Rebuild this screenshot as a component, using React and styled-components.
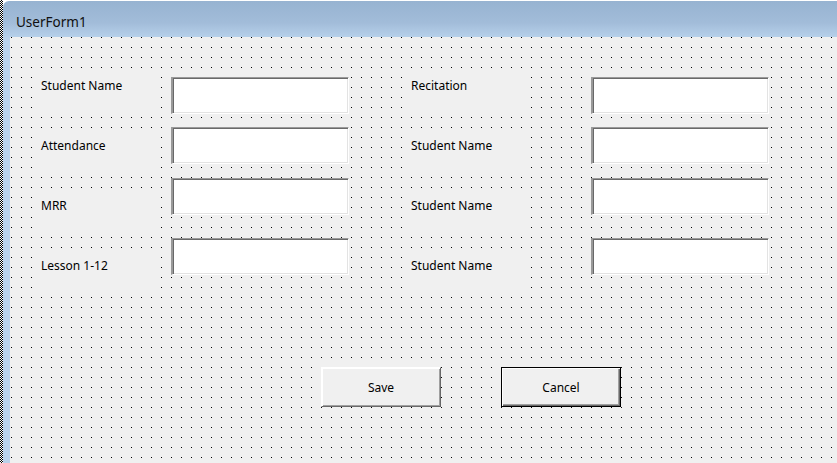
import React from 'react';
import styled, { createGlobalStyle } from 'styled-components';

const GlobalStyle = createGlobalStyle`
  html, body {
    margin: 0;
    padding: 0;
    background: #ffffff;
  }
  body {
    font-family: "Noto Sans", "DejaVu Sans", sans-serif;
  }
`;

// whole designer surface
const Screen = styled.div`
  display: flex;
  width: 837px;
  height: 463px;
  overflow: hidden;
`;

// selection hatching at the far left
const Hatch = styled.div`
  width: 3px;
  flex: none;
  background: conic-gradient(#000 25%, #fff 0 50%, #000 0 75%, #fff 0) 0 0 / 2px 2px;
`;

const Window = styled.div`
  flex: 1;
  display: flex;
  flex-direction: column;
  padding-top: 1px;
`;

const TitleBar = styled.div`
  height: 36px;
  box-sizing: border-box;
  flex: none;
  display: flex;
  align-items: center;
  padding: 5px 0 0 13px;
  border-top-left-radius: 6px;
  background: linear-gradient(#97b3d1, #a2bcd9 60%, #b6d0ea);
  font-size: 13.5px;
  color: #101010;
`;

const Body = styled.div`
  flex: 1;
  display: flex;
`;

const Frame = styled.div`
  width: 7px;
  flex: none;
  background: #b9d1ea;
`;

// dotted grid of the form designer
const Client = styled.div`
  flex: 1;
  background-color: #f0f0f0;
  background-image: conic-gradient(from 270deg at 1px 1px, #000 90deg, transparent 0);
  background-size: 10px 10px;
  background-position: 1px 0;
  padding: 40px 0 0 31px;
  font-size: 12px;
  color: #000;
`;

const Row = styled.div`
  display: grid;
  grid-template-columns: 130px 178px 62px 180px 178px;
  grid-template-rows: 37px;
  align-items: start;
  height: 37px;
  margin-top: ${p => p.$gap}px;
`;

const Label = styled.div`
  margin: ${p => p.$offset - 7}px 0 0 -6px;
  padding: 8px 0 0 6px;
  width: 118px;
  height: 34px;
  background: #f0f0f0;
  line-height: 16px;
  white-space: nowrap;
`;

const TextBox = styled.div`
  height: 37px;
  box-sizing: border-box;
  background: #fff;
  border-top: 1px solid #999;
  border-left: 2px solid #999;
  border-right: 1px solid #fff;
  border-bottom: 1px solid #fff;
  box-shadow: inset 1px 1px #696969, inset -1px -1px #e3e3e3;
`;

const Spacer = styled.div``;

const Buttons = styled.div`
  display: flex;
  gap: 60px;
  margin: 92px 0 0 280px;
`;

const Button = styled.div`
  width: 120px;
  height: 40px;
  box-sizing: border-box;
  display: flex;
  align-items: center;
  justify-content: center;
  background: #f0f0f0;
  border: 1px solid;
  border-color: ${p => (p.$default ? '#000' : '#fff #696969 #696969 #fff')};
  box-shadow: ${p =>
    p.$default
      ? 'inset 1px 1px #fff, inset -1px -1px #696969, inset -2px -2px #a0a0a0'
      : 'inset 1px 1px #fff, inset -1px -1px #a0a0a0'};
  font-size: 12px;
`;

const rows = [
  { gap: 0, offset: 0, left: 'Student Name', right: 'Recitation' },
  { gap: 13, offset: 10, left: 'Attendance', right: 'Student Name' },
  { gap: 14, offset: 19, left: 'MRR', right: 'Student Name' },
  { gap: 23, offset: 19, left: 'Lesson 1-12', right: 'Student Name' },
];

export default function App() {
  return (
    <>
      <GlobalStyle />
      <Screen>
        <Hatch />
        <Window>
          <TitleBar>UserForm1</TitleBar>
          <Body>
            <Frame />
            <Client>
              {rows.map((r, i) => (
                <Row key={i} $gap={r.gap}>
                  <Label $offset={r.offset}>{r.left}</Label>
                  <TextBox />
                  <Spacer />
                  <Label $offset={r.offset}>{r.right}</Label>
                  <TextBox />
                </Row>
              ))}
              <Buttons>
                <Button>Save</Button>
                <Button $default>Cancel</Button>
              </Buttons>
            </Client>
          </Body>
        </Window>
      </Screen>
    </>
  );
}
